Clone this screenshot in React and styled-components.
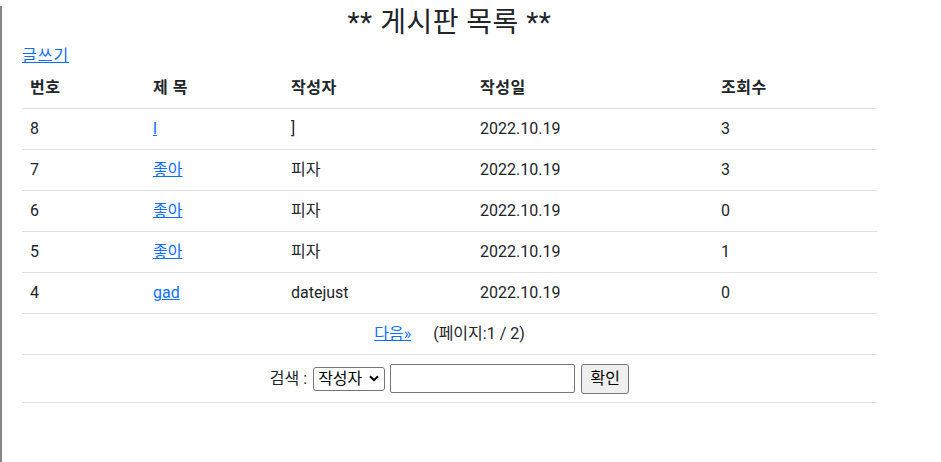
import React from 'react';
import styled, { createGlobalStyle, css } from 'styled-components';

const GlobalStyle = createGlobalStyle`
  html, body {
    margin: 0;
    padding: 0;
    background: #fff;
  }
  body {
    font-family: Roboto, "Noto Sans CJK KR", sans-serif;
    font-size: 16px;
    line-height: 1.5;
    color: #212529;
  }
`;

const Page = styled.div`
  min-height: 100vh;
  box-sizing: border-box;
  border-left: 2px solid #878787;
  padding-left: 20px;
`;

const Board = styled.div`
  width: 855px;
`;

const Title = styled.h3`
  margin: 6px 0 4px;
  font-size: 28px;
  font-weight: 400;
  line-height: 34px;
  letter-spacing: 0.5px;
  text-align: center;
`;

const TextLink = styled.a`
  color: #0d6efd;
  text-decoration: underline;
  cursor: pointer;
`;

const WriteRow = styled.div`
  height: 24px;
  letter-spacing: 1px;
`;

const Table = styled.table`
  width: 100%;
  border-collapse: collapse;
  table-layout: fixed;
`;

const Col = styled.col`
  width: ${(p) => p.$w}px;
`;

const cellBase = css`
  padding: 8px;
  border-bottom: 1px solid #dee2e6;
  vertical-align: middle;
  text-align: ${(p) => (p.$center ? 'center' : 'left')};
`;

const HeadCell = styled.th`
  ${cellBase}
  font-weight: 700;
  letter-spacing: 0.5px;
`;

const Cell = styled.td`
  ${cellBase}
`;

const PageInfo = styled.span`
  margin-left: 22px;
`;

const SearchBar = styled.div`
  display: inline-flex;
  align-items: center;
  height: 31px;
  vertical-align: top;
`;

const Label = styled.span`
  margin-right: 6px;
`;

const SelectWrap = styled.span`
  position: relative;
  display: inline-block;
  height: 24px;
  margin-right: 5px;
`;

const Select = styled.select`
  appearance: none;
  box-sizing: border-box;
  width: 72px;
  height: 24px;
  padding: 0 18px 0 4px;
  border: 1px solid #767676;
  border-radius: 3px;
  background: #fff;
  color: #000;
  font-family: inherit;
  font-size: 16px;
  line-height: 22px;
`;

const Chevron = styled.svg`
  position: absolute;
  right: 6px;
  top: 8px;
  pointer-events: none;
`;

const Input = styled.input`
  box-sizing: border-box;
  width: 185px;
  height: 29px;
  margin-right: 6px;
  border: 1px solid #767676;
  border-radius: 2px;
  padding: 1px 4px;
  font-family: inherit;
  font-size: 16px;
`;

const Button = styled.button`
  box-sizing: border-box;
  width: 48px;
  height: 30px;
  padding: 0;
  border: 1px solid #767676;
  border-radius: 3px;
  background: #efefef;
  color: #000;
  font-family: inherit;
  font-size: 16px;
  line-height: 1;
`;

const posts = [
  { no: 8, title: 'l', writer: ']', date: '2022.10.19', hit: 3 },
  { no: 7, title: '좋아', writer: '피자', date: '2022.10.19', hit: 3 },
  { no: 6, title: '좋아', writer: '피자', date: '2022.10.19', hit: 0 },
  { no: 5, title: '좋아', writer: '피자', date: '2022.10.19', hit: 1 },
  { no: 4, title: 'gad', writer: 'datejust', date: '2022.10.19', hit: 0 },
];

const App = () => {
  const [keyword, setKeyword] = React.useState('');

  return (
    <Page>
      <GlobalStyle />
      <Board>
        <Title>** 게시판 목록 **</Title>
        <WriteRow>
          <TextLink>글쓰기</TextLink>
        </WriteRow>
        <Table>
          <colgroup>
            <Col $w={123} />
            <Col $w={138} />
            <Col $w={189} />
            <Col $w={241} />
            <Col $w={164} />
          </colgroup>
          <thead>
            <tr>
              <HeadCell>번호</HeadCell>
              <HeadCell>제 목</HeadCell>
              <HeadCell>작성자</HeadCell>
              <HeadCell>작성일</HeadCell>
              <HeadCell>조회수</HeadCell>
            </tr>
          </thead>
          <tbody>
            {posts.map((p) => (
              <tr key={p.no}>
                <Cell>{p.no}</Cell>
                <Cell>
                  <TextLink>{p.title}</TextLink>
                </Cell>
                <Cell>{p.writer}</Cell>
                <Cell>{p.date}</Cell>
                <Cell>{p.hit}</Cell>
              </tr>
            ))}
            <tr>
              <Cell colSpan={5} $center>
                <TextLink>다음»</TextLink>
                <PageInfo>(페이지:1 / 2)</PageInfo>
              </Cell>
            </tr>
            <tr>
              <Cell colSpan={5} $center>
                <SearchBar>
                  <Label>검색 :</Label>
                  <SelectWrap>
                    <Select defaultValue="writer">
                      <option value="writer">작성자</option>
                      <option value="title">제목</option>
                    </Select>
                    <Chevron width="10" height="7" viewBox="0 0 10 7">
                      <polyline
                        points="1,1.2 5,5.2 9,1.2"
                        fill="none"
                        stroke="#000"
                        strokeWidth="2"
                      />
                    </Chevron>
                  </SelectWrap>
                  <Input
                    type="text"
                    value={keyword}
                    onChange={(e) => setKeyword(e.target.value)}
                  />
                  <Button type="button">확인</Button>
                </SearchBar>
              </Cell>
            </tr>
          </tbody>
        </Table>
      </Board>
    </Page>
  );
};

export default App;
